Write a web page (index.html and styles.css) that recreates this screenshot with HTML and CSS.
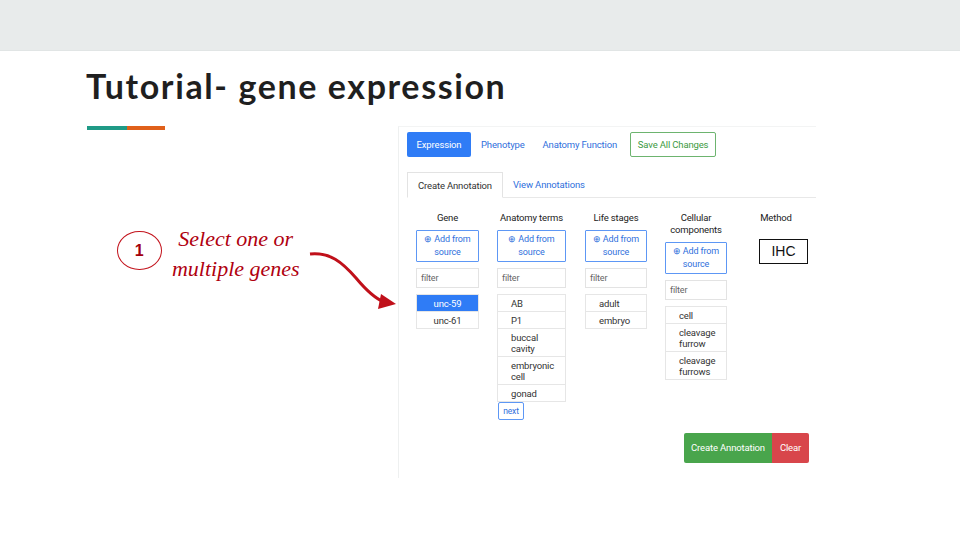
FILE: index.html
```html
<!DOCTYPE html>
<html>
<head>
<meta charset="utf-8">
<link rel="stylesheet" href="styles.css">
</head>
<body>
<div class="slide">
  <div class="topbar"></div>
  <h1 class="title">Tutorial- gene expression</h1>
  <div class="main">
    <div class="left">
      <div class="accent"><span class="teal"></span><span class="orange"></span></div>
      <div class="note">
        <div class="circle">1</div>
        <div class="note-text">Select one or<br>multiple genes</div>
        <svg class="arrow" width="90" height="62" viewBox="0 0 90 62">
          <path d="M2 6 C 22 4, 34 14, 48 30 C 58 42, 66 50, 76 54" fill="none" stroke="#c0101a" stroke-width="3"/>
          <path d="M73 46 L88 56 L70 61 Z" fill="#c0101a"/>
        </svg>
      </div>
    </div>
    <div class="panel">
      <div class="nav">
        <span class="pill">Expression</span>
        <span class="link">Phenotype</span>
        <span class="link">Anatomy Function</span>
        <span class="save">Save All Changes</span>
      </div>
      <div class="tabs">
        <span class="tab active">Create Annotation</span>
        <span class="tab">View Annotations</span>
      </div>
      <div class="cols">
        <div class="col gene">
          <div class="head">Gene</div>
          <div class="add">⊕ Add from<br>source</div>
          <div class="filter">filter</div>
          <div class="list">
            <div class="item sel">unc-59</div>
            <div class="item">unc-61</div>
          </div>
        </div>
        <div class="col anat">
          <div class="head">Anatomy terms</div>
          <div class="add">⊕ Add from<br>source</div>
          <div class="filter">filter</div>
          <div class="list">
            <div class="item">AB</div>
            <div class="item">P1</div>
            <div class="item">buccal<br>cavity</div>
            <div class="item">embryonic<br>cell</div>
            <div class="item">gonad</div>
          </div>
          <div class="next">next</div>
        </div>
        <div class="col life">
          <div class="head">Life stages</div>
          <div class="add">⊕ Add from<br>source</div>
          <div class="filter">filter</div>
          <div class="list">
            <div class="item">adult</div>
            <div class="item">embryo</div>
          </div>
        </div>
        <div class="col cell">
          <div class="head">Cellular<br>components</div>
          <div class="add">⊕ Add from<br>source</div>
          <div class="filter">filter</div>
          <div class="list">
            <div class="item">cell</div>
            <div class="item">cleavage<br>furrow</div>
            <div class="item">cleavage<br>furrows</div>
          </div>
        </div>
        <div class="col method">
          <div class="head">Method</div>
          <div class="ihc">IHC</div>
        </div>
      </div>
      <div class="actions">
        <span class="create">Create Annotation</span><span class="clear">Clear</span>
      </div>
    </div>
  </div>
</div>
</body>
</html>
```

FILE: styles.css
```css
* { box-sizing: border-box; }
html, body { margin: 0; padding: 0; }
body { width: 960px; height: 540px; background: #fff; overflow: hidden; }
.slide { width: 960px; height: 540px; display: flex; flex-direction: column; }
.topbar { height: 51px; background: #e8ebeb; border-bottom: 1px solid #e1e5e5; flex: none; }
.title {
  margin: 15px 0 0 86px;
  font-family: "Lato", sans-serif;
  font-weight: 700;
  font-size: 34px;
  line-height: 40px;
  color: #1f1f1f;
  letter-spacing: 1.6px;
}
.main { display: flex; margin-top: 20px; }
.left { width: 398px; flex: none; padding-left: 87px; }
.accent { display: flex; height: 4px; }
.accent .teal { width: 40px; background: #1f9a86; }
.accent .orange { width: 38px; background: #e0601a; }
.note { display: flex; align-items: flex-start; margin: 94px 0 0 30px; }
.circle {
  width: 45px; height: 39px; margin-top: 7px;
  border: 1.5px solid #c3141d; border-radius: 50%;
  display: flex; align-items: center; justify-content: center;
  font-family: "Liberation Sans", sans-serif; font-weight: 700; font-size: 16px; color: #a3000d;
}
.note-text {
  margin-left: 5px;
  font-family: "Liberation Serif", serif; font-style: italic;
  font-size: 22px; line-height: 30px; color: #b0000f;
  text-align: center; width: 140px;
}
.arrow { margin: 24px 0 0 3px; flex: none; }

.panel {
  width: 418px; height: 352px; flex: none;
  border-left: 1px solid #eef0f0; border-top: 1px solid #f3f4f4;
  padding: 5px 0 0 8px;
  font-family: "Roboto", sans-serif; font-size: 9.5px; color: #333;
  letter-spacing: -0.15px;
  white-space: nowrap;
}
.nav { display: flex; align-items: center; height: 25px; }
.pill { background: #2f7cf6; color: #fff; height: 25px; line-height: 25px; border-radius: 2px; width: 64px; text-align: center; }
.link { color: #2f6fdc; padding: 0 9px; }
.nav .pill + .link { margin-left: 1px; }
.save { margin-left: 4px; color: #3d9a3f; border: 1px solid #6db46f; border-radius: 2px; height: 25px; line-height: 23px; width: 86px; text-align: center; }
.tabs { display: flex; margin-top: 15px; border-bottom: 1px solid #e8e8e8; height: 26px; }
.tab { padding: 0 10px; line-height: 25px; color: #2f6fdc; }
.tab.active { color: #333; border: 1px solid #e3e3e3; border-bottom: 1px solid #fff; background: #fff; height: 26px; }

.cols { display: flex; align-items: flex-start; margin: 14px 0 0 9px; }
.col { display: flex; flex-direction: column; }
.gene { width: 63px; }
.anat { width: 69px; margin-left: 18px; }
.life { width: 62px; margin-left: 19px; }
.cell { width: 62px; margin-left: 18px; }
.method { width: 62px; margin-left: 18px; }
.head { text-align: center; line-height: 12px; color: #222; }
.add {
  margin-top: 6px; height: 32px; border: 1px solid #5d97f5; border-radius: 1px;
  color: #2f6fdc; text-align: center; line-height: 13px; padding-top: 2px; font-size: 9px;
}
.filter { margin-top: 6px; height: 20px; border: 1px solid #e3e3e3; line-height: 18px; padding-left: 4px; color: #666; font-size: 9px; }
.list { margin-top: 6px; border: 1px solid #e6e6e6; }
.item { padding: 3px 0 2px 13px; line-height: 11px; border-top: 1px solid #e6e6e6; color: #333; }
.item:first-child { border-top: none; }
.item.sel { background: #2f7cf6; color: #fff; }
.gene .item { text-align: center; padding-left: 0; }
.next {
  width: 26px; height: 18px; margin: 0 0 0 1px; border: 1px solid #5d97f5; border-radius: 2px;
  color: #2f6fdc; font-size: 8.5px; line-height: 16px; text-align: center;
}
.ihc {
  margin: 15px 0 0 14px; width: 49px; height: 25px; border: 1px solid #111;
  font-family: "Liberation Sans", sans-serif; font-size: 14px; color: #111; line-height: 23px; text-align: center;
  letter-spacing: 0;
}
.actions { display: flex; justify-content: flex-end; margin: 13px 7px 0 0; }
.create, .clear { height: 30px; line-height: 30px; color: #fff; font-size: 9.5px; }
.create { background: #49a54c; border-radius: 2px 0 0 2px; width: 88px; text-align: center; }
.clear { background: #d8464b; width: 37px; text-align: center; border-radius: 0 2px 2px 0; }
```
